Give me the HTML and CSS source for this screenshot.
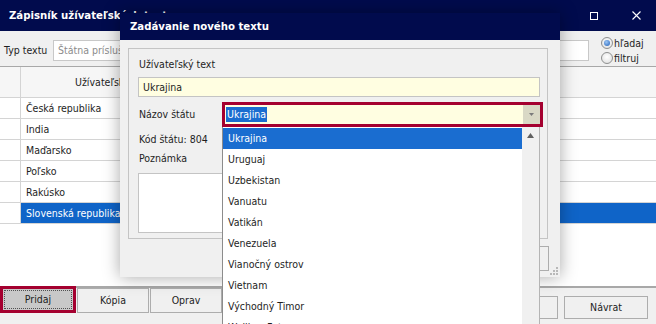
FILE: index.html
```html
<!DOCTYPE html>
<html lang="sk">
<head>
    <meta charset="UTF-8">
    <title>Zápisník užívateľských textov</title>
    <link rel="stylesheet" href="styles.css">
</head>
<body>
    <div class="window">
        <div class="titlebar">
            <span class="title">Zápisník užívateľských textov</span>
            <div class="win-controls">
                <span class="ctl-max"></span>
                <svg class="ctl-close" width="9" height="9" viewBox="0 0 9 9">
                    <path d="M0.5 0.5 L8.5 8.5 M8.5 0.5 L0.5 8.5" stroke="#fff" stroke-width="1.1"/>
                </svg>
            </div>
        </div>

        <div class="filter">
            <span class="filter-label">Typ textu</span>
            <div class="field">Štátna príslušnosť</div>
            <div class="radios">
                <div class="radio-item"><span class="radio on"></span>hľadaj</div>
                <div class="radio-item"><span class="radio"></span>filtruj</div>
            </div>
        </div>

        <div class="grid">
            <div class="grid-row grid-head">
                <div class="cell-num"></div>
                <div class="cell head-cell">Užívateľský text</div>
            </div>
            <div class="grid-row"><div class="cell-num"></div><div class="cell">Česká republika</div></div>
            <div class="grid-row"><div class="cell-num"></div><div class="cell">India</div></div>
            <div class="grid-row"><div class="cell-num"></div><div class="cell">Maďarsko</div></div>
            <div class="grid-row"><div class="cell-num"></div><div class="cell">Poľsko</div></div>
            <div class="grid-row"><div class="cell-num"></div><div class="cell">Rakúsko</div></div>
            <div class="grid-row selected"><div class="cell-num"></div><div class="cell">Slovenská republika</div></div>
        </div>

        <div class="btnbar">
            <div class="btn focused"><span class="focus-rect">Pridaj</span></div>
            <div class="btn">Kópia</div>
            <div class="btn">Oprav</div>
            <div class="btn-group">
                <div class="btn wide">Zruš</div>
                <div class="btn wide">Návrat</div>
            </div>
        </div>
    </div>

    <div class="dialog">
        <div class="dialog-title">Zadávanie nového textu</div>
        <div class="dialog-body">
            <div class="group">
                <div class="lbl first">Užívateľský text</div>
                <div class="input">Ukrajina</div>
                <div class="name-row">
                    <span class="lbl name-lbl">Názov štátu</span>
                    <div class="combo">
                        <span class="combo-text"><span class="sel">Ukrajina</span></span>
                        <span class="combo-arrow">
                            <svg width="5" height="3" viewBox="0 0 5 3"><path d="M0 0 H5 L2.5 3 Z" fill="#7a7a7a"/></svg>
                        </span>
                    </div>
                </div>
                <div class="lbl code">Kód štátu: 804</div>
                <div class="lbl note">Poznámka</div>
                <div class="textarea"></div>
            </div>
            <div class="dialog-buttons">
                <div class="btn wide">OK</div>
                <div class="btn wide">Zrušiť</div>
            </div>
        </div>
        <svg class="grip" width="10" height="10" viewBox="0 0 10 10" fill="#b8b8b8">
            <rect x="7" y="1" width="2" height="2"/>
            <rect x="4" y="4" width="2" height="2"/><rect x="7" y="4" width="2" height="2"/>
            <rect x="1" y="7" width="2" height="2"/><rect x="4" y="7" width="2" height="2"/><rect x="7" y="7" width="2" height="2"/>
        </svg>
    </div>

    <div class="dropdown">
        <div class="items">
            <div class="item active">Ukrajina</div>
            <div class="item">Uruguaj</div>
            <div class="item">Uzbekistan</div>
            <div class="item">Vanuatu</div>
            <div class="item">Vatikán</div>
            <div class="item">Venezuela</div>
            <div class="item">Vianočný ostrov</div>
            <div class="item">Vietnam</div>
            <div class="item">Východný Timor</div>
            <div class="item">Wallis a Futuna</div>
        </div>
        <div class="scrollbar">
            <svg width="7" height="5" viewBox="0 0 7 5"><path d="M0 5 L3.5 0 L7 5 Z" fill="#606060"/></svg>
        </div>
    </div>
</body>
</html>
```

FILE: styles.css
```css
* {
    margin: 0;
    padding: 0;
    box-sizing: border-box;
}

body {
    width: 656px;
    height: 324px;
    overflow: hidden;
    position: relative;
    background: #f0f0f0;
    font-family: "DejaVu Sans Condensed", "DejaVu Sans", sans-serif;
    font-stretch: condensed;
    font-size: 10.5px;
    color: #1e1e1e;
}

.window {
    display: flex;
    flex-direction: column;
    height: 324px;
}

/* title bar */
.titlebar {
    height: 31px;
    flex: none;
    background: #010b4d;
    color: #fff;
    display: flex;
    align-items: center;
    padding-left: 9px;
}

.titlebar .title {
    flex: 1;
    font-weight: bold;
    font-size: 11.3px;
}

.win-controls {
    display: flex;
    align-items: center;
    gap: 34px;
    padding-right: 15px;
}

.ctl-max {
    width: 8px;
    height: 8px;
    border: 1px solid #fff;
}

/* filter row */
.filter {
    height: 35px;
    flex: none;
    display: flex;
    align-items: flex-start;
    padding: 9px 0 0 4px;
}

.filter-label {
    width: 49px;
    line-height: 21px;
}

.field {
    width: 536px;
    height: 21px;
    border: 1px solid #c8c8c8;
    background: #fff;
    color: #8c8c8c;
    padding-left: 4px;
    line-height: 19px;
}

.radios {
    margin: -5px 0 0 12px;
}

.radio-item {
    display: flex;
    align-items: center;
    gap: 1px;
    height: 15px;
}

.radio {
    width: 12px;
    height: 12px;
    border-radius: 50%;
    border: 1px solid #8e8f8f;
    background: radial-gradient(circle at 50% 40%, #fff, #dcdcdc);
    display: flex;
    align-items: center;
    justify-content: center;
}

.radio.on::after {
    content: "";
    width: 6px;
    height: 6px;
    border-radius: 50%;
    background: radial-gradient(circle at 40% 35%, #9cc6f5, #1f5fb8);
}

/* grid */
.grid {
    flex: 1;
    background: #fff;
    border-top: 1px solid #a8a8a8;
}

.grid-row {
    display: flex;
    height: 21px;
    border-bottom: 1px solid #d4d4d4;
}

.grid-head {
    height: 31px;
    background: #f6f6f6;
}

.cell-num {
    width: 21px;
    border-right: 1px solid #d4d4d4;
}

.cell {
    flex: 1;
    padding-left: 5px;
    line-height: 20px;
}

.head-cell {
    padding-left: 54px;
    line-height: 30px;
}

.grid-row.selected .cell {
    background: #0f64c8;
    color: #fff;
}

/* buttons */
.btnbar {
    height: 38px;
    flex: none;
    border-top: 2px solid #a8a8a8;
    display: flex;
    align-items: flex-start;
    gap: 1px;
}

.btn {
    width: 72px;
    height: 25px;
    border: 1px solid #adadad;
    background: #f0f0f0;
    text-align: center;
    line-height: 23px;
}

.btn.wide {
    width: 84px;
    height: 23px;
    line-height: 21px;
}

.btn.focused {
    width: 76px;
    height: 27px;
    margin-top: -2px;
    border: 3px solid #a4002f;
    background: #c8c8c8;
    padding: 1px;
    line-height: 17px;
}

.focus-rect {
    display: block;
    height: 19px;
    border: 1px dotted #505050;
}

.btn-group {
    margin: 8px 8px 0 auto;
    display: flex;
    gap: 6px;
}

/* dialog */
.dialog {
    position: absolute;
    left: 120px;
    top: 13px;
    width: 440px;
    height: 264px;
    background: #f0f0f0;
    box-shadow: 0 0 16px rgba(0, 0, 0, 0.35);
    display: flex;
    flex-direction: column;
}

.dialog-title {
    height: 27px;
    flex: none;
    background: #010b4d;
    color: #fff;
    font-weight: bold;
    font-size: 11.3px;
    line-height: 27px;
    padding-left: 10px;
}

.dialog-body {
    padding: 8px 12px 0 8px;
}

.group {
    height: 191px;
    border: 1px solid #c4c4c4;
    padding-left: 9px;
}

.lbl {
    line-height: 15px;
    padding-left: 1px;
}

.lbl.first {
    margin-top: 8px;
}

.input {
    width: 402px;
    height: 20px;
    margin-top: 5px;
    border: 1px solid #c4c4c4;
    background: #fffee1;
    padding-left: 4px;
    line-height: 18px;
}

.name-row {
    display: flex;
    align-items: center;
    margin-top: 5px;
}

.name-lbl {
    width: 84px;
}

.combo {
    width: 321px;
    height: 25px;
    border: 3px solid #a4002f;
    background: #fffee1;
    display: flex;
}

.combo-text {
    flex: 1;
    padding: 2px 0 0 1px;
}

.sel {
    display: inline-block;
    background: #1a6dd0;
    color: #fff;
    line-height: 15px;
    padding: 0 1px;
}

.combo-arrow {
    width: 17px;
    background: #d9d8c5;
    display: flex;
    align-items: center;
    justify-content: center;
}

.lbl.code {
    margin-top: 5px;
}

.lbl.note {
    margin-top: 4px;
}

.textarea {
    width: 401px;
    height: 60px;
    margin-top: 7px;
    border: 1px solid #c4c4c4;
    background: #fff;
}

.dialog-buttons {
    display: flex;
    justify-content: flex-end;
    gap: 6px;
    margin: 7px -1px 0 0;
}

.dialog-buttons .btn {
    height: 25px;
}

.grip {
    position: absolute;
    right: 1px;
    bottom: 1px;
}

/* dropdown list of the combo */
.dropdown {
    position: absolute;
    left: 222px;
    top: 127px;
    width: 318px;
    height: 200px;
    background: #fff;
    border-left: 1px solid #8c8c8c;
    border-right: 1px solid #b4b4b4;
    display: flex;
}

.items {
    flex: 1;
    padding-top: 1px;
}

.item {
    height: 21px;
    line-height: 20px;
    padding-left: 5px;
}

.item.active {
    background: #1a6dd0;
    color: #fff;
}

.scrollbar {
    width: 17px;
    background: #f0f0f0;
    display: flex;
    justify-content: center;
    padding-top: 6px;
}
```
